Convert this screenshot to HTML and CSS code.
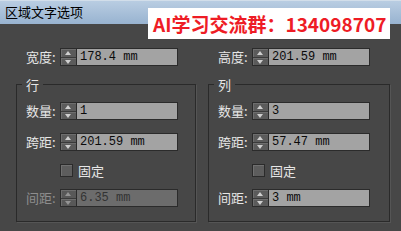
FILE: index.html
```html
<!DOCTYPE html>
<html lang="zh">
<head>
<meta charset="utf-8">
<title>区域文字选项</title>
<link rel="stylesheet" href="styles.css">
</head>
<body>
<div class="titlebar">区域文字选项</div>
<div class="banner">AI学习交流群：134098707</div>
<div class="content">
  <div class="col">
    <div class="row top"><span class="lbl">宽度:</span><span class="spin"><i class="up"></i><i class="dn"></i></span><span class="field">178.4 mm</span></div>
    <fieldset class="group">
      <legend>行</legend>
      <div class="row"><span class="lbl">数量:</span><span class="spin"><i class="up"></i><i class="dn"></i></span><span class="field">1</span></div>
      <div class="row gap"><span class="lbl">跨距:</span><span class="spin"><i class="up"></i><i class="dn"></i></span><span class="field">201.59 mm</span></div>
      <div class="check"><span class="box"></span><span>固定</span></div>
      <div class="row disabled"><span class="lbl">间距:</span><span class="spin"><i class="up"></i><i class="dn"></i></span><span class="field">6.35 mm</span></div>
    </fieldset>
  </div>
  <div class="col wide">
    <div class="row top"><span class="lbl">高度:</span><span class="spin"><i class="up"></i><i class="dn"></i></span><span class="field">201.59 mm</span></div>
    <fieldset class="group">
      <legend>列</legend>
      <div class="row"><span class="lbl">数量:</span><span class="spin"><i class="up"></i><i class="dn"></i></span><span class="field">3</span></div>
      <div class="row gap"><span class="lbl">跨距:</span><span class="spin"><i class="up"></i><i class="dn"></i></span><span class="field">57.47 mm</span></div>
      <div class="check"><span class="box"></span><span>固定</span></div>
      <div class="row"><span class="lbl">间距:</span><span class="spin"><i class="up"></i><i class="dn"></i></span><span class="field">3 mm</span></div>
    </fieldset>
  </div>
</div>
</body>
</html>
```
FILE: styles.css
```css
html, body {
  margin: 0;
  padding: 0;
}
body {
  width: 401px;
  height: 231px;
  background: #474747;
  font-family: "Noto Sans CJK SC", "Noto Sans", sans-serif;
  font-size: 13px;
  color: #e6e6e6;
  overflow: hidden;
  position: relative;
}
.titlebar {
  height: 24px;
  box-sizing: border-box;
  border-top: 1px solid #d2deea;
  background: linear-gradient(#b9cde2, #98b3d0);
  color: #000;
  padding-left: 5px;
  line-height: 22px;
  font-size: 13px;
}
.banner {
  position: absolute;
  left: 148px;
  top: 8px;
  width: 242px;
  height: 31px;
  background: #fff;
  color: #ee1c25;
  font-weight: bold;
  font-size: 19px;
  line-height: 31px;
  padding-left: 5px;
  box-sizing: border-box;
  white-space: nowrap;
}
.content {
  display: flex;
  gap: 12px;
  padding: 24px 0 0 16px;
}
.col {
  width: 180px;
  display: flex;
  flex-direction: column;
}
.col.wide {
  width: 182px;
}
.row {
  display: flex;
  align-items: center;
  height: 18px;
}
.row.top {
  padding-left: 10px;
  margin-bottom: 12px;
}
.lbl {
  width: 34px;
  line-height: 18px;
  white-space: nowrap;
}
.spin {
  width: 16px;
  height: 18px;
  box-sizing: border-box;
  border: 1px solid #2b2b2b;
  border-right: none;
  display: flex;
  flex-direction: column;
  background: #5b5b5b;
}
.spin i {
  flex: 1;
  position: relative;
  box-shadow: inset 1px 1px 0 #6e6e6e;
}
.spin i.up {
  border-bottom: 1px solid #3a3a3a;
}
.spin i::after {
  content: "";
  position: absolute;
  left: 4px;
  width: 0;
  height: 0;
  border-left: 3.5px solid transparent;
  border-right: 3.5px solid transparent;
}
.spin i.up::after {
  top: 2px;
  border-bottom: 4px solid #cfcfcf;
}
.spin i.dn::after {
  top: 2px;
  border-top: 4px solid #cfcfcf;
}
.field {
  width: 102px;
  height: 18px;
  box-sizing: border-box;
  border: 1px solid #2b2b2b;
  background: #a3a3a3;
  color: #0a0a0a;
  font-family: "Liberation Mono", "DejaVu Sans Mono", monospace;
  font-size: 12px;
  line-height: 16px;
  padding-left: 3px;
  white-space: nowrap;
}
.group {
  margin: 0;
  padding: 11px 0 14px 9px;
  border: 1px solid #2a2a2a;
  box-shadow: 1px 1px 0 #555;
  display: flex;
  flex-direction: column;
}
.group legend {
  margin-left: -4px;
  padding: 0 4px;
  line-height: 13px;
  font-size: 13px;
  color: #e6e6e6;
}
.row.gap {
  margin-top: 13px;
}
.check {
  display: flex;
  align-items: center;
  gap: 5px;
  margin: 12px 0 0 34px;
  height: 14px;
}
.check .box {
  width: 13px;
  height: 13px;
  box-sizing: border-box;
  border: 1px solid #2b2b2b;
  background: #5d5d5d;
  box-shadow: inset 1px 1px 0 #707070;
}
.check + .row {
  margin-top: 12px;
}
.disabled .lbl {
  color: #8e8e8e;
}
.disabled .spin {
  background: #585858;
}
.disabled .spin i::after {
  opacity: 0.5;
}
.disabled .field {
  background: #6c6c6c;
  color: #333;
}
```
